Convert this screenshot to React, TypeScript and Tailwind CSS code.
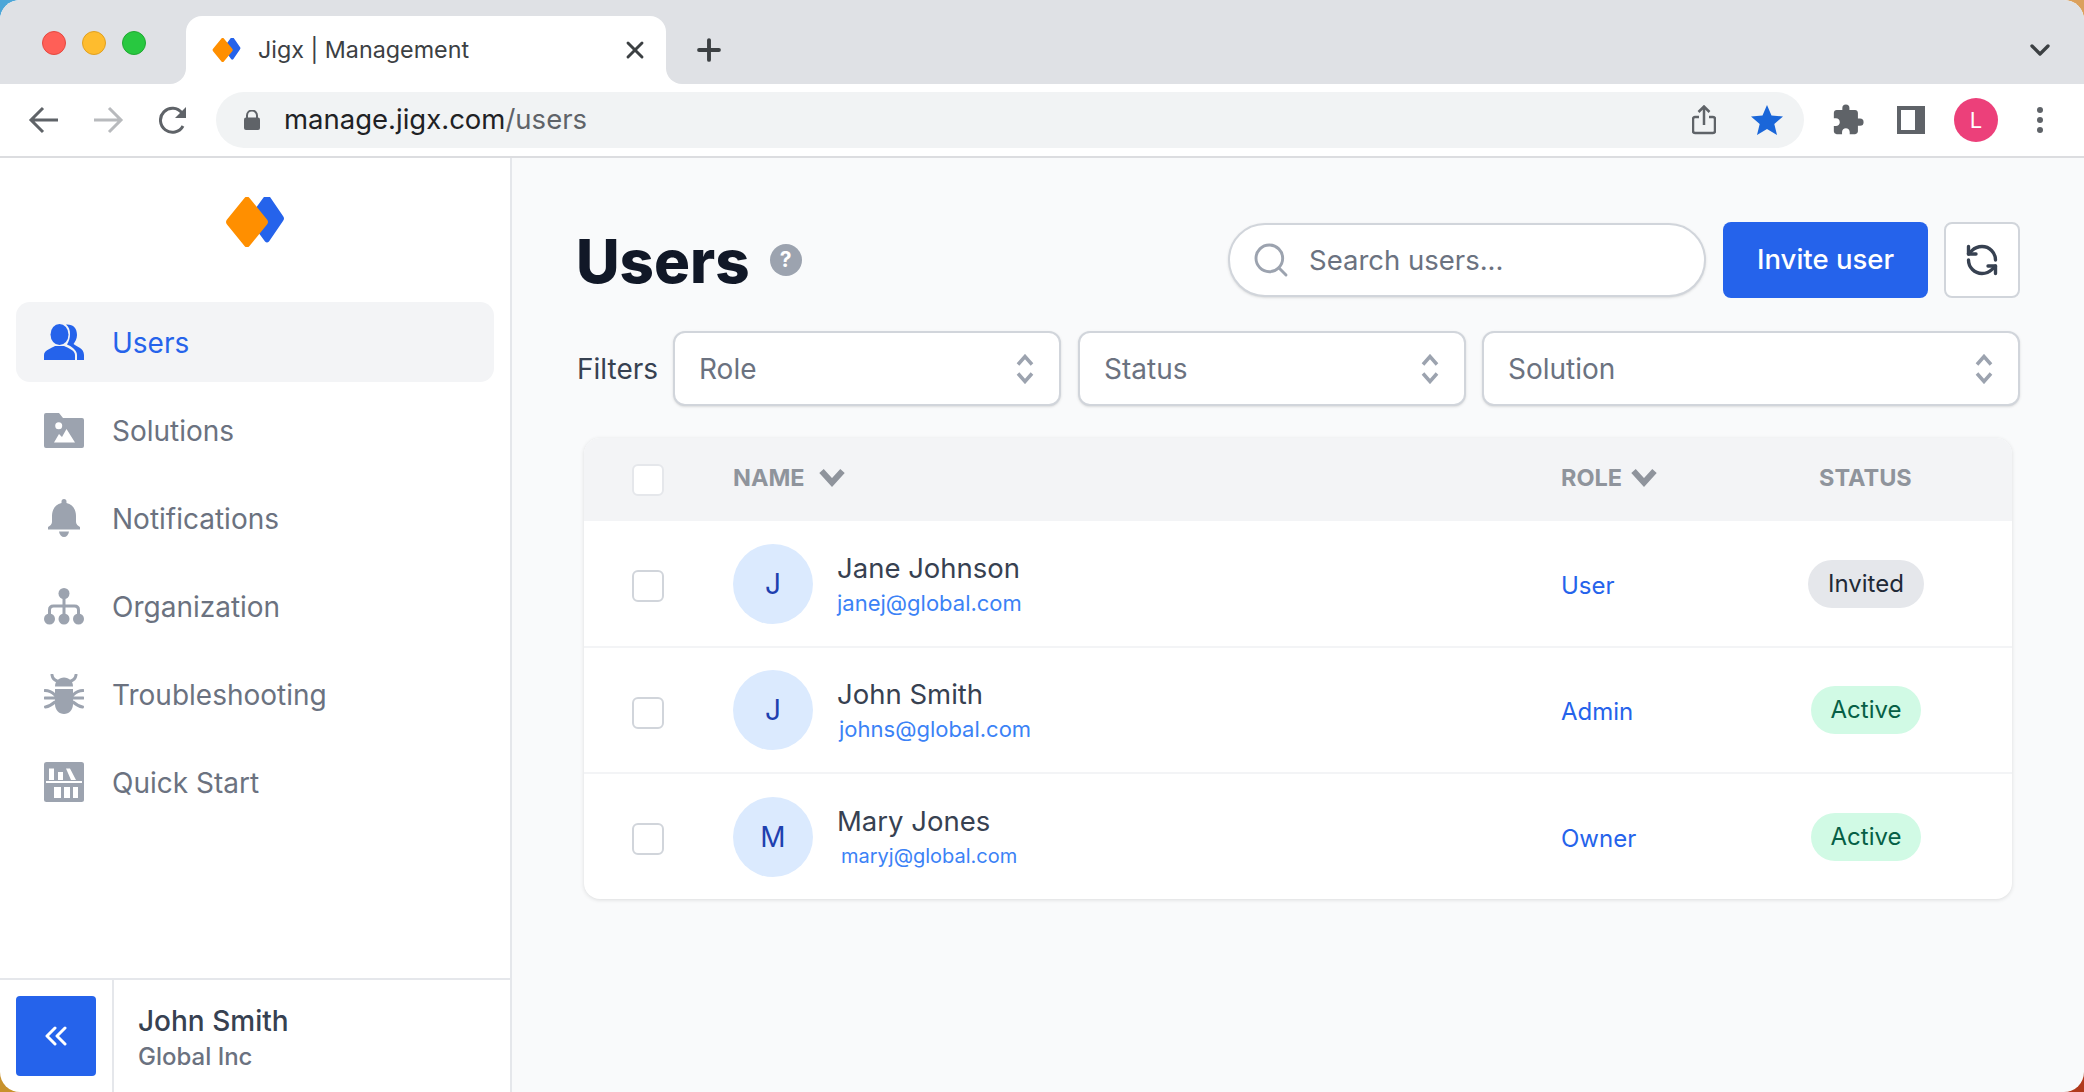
import { ChevronDown, Plus, RefreshCcw, Search, X } from 'lucide-react'
import { MdExtension } from 'react-icons/md'
import clsx from 'clsx'

function Logo({ w, h }: { w: number; h: number }) {
  return (
    <svg width={w} height={h} viewBox="0 0 58 50">
      <path d="M39 1.5a3 3 0 0 1 4 0l14 20.5a4 4 0 0 1 0 5L43 47.500a3 3 0 0 1-4 0L24 27a4 4 0 0 1 0-5z" fill="#2563eb" transform="translate(0 -3)" />
      <path d="M18.500 1a3 3 0 0 1 5 0l17.500 21.500a4 4 0 0 1 0 5L23.500 49a3 3 0 0 1-5 0L1 27.500a4 4 0 0 1 0-5z" fill="#ff8f00" />
    </svg>
  )
}

function UsersIcon() {
  return (
    <svg width="40" height="36" viewBox="0 0 40 36" fill="#2563eb">
      <ellipse cx="15.500" cy="10.500" rx="9" ry="10.500" />
      <path d="M0 36v-5c0-5 8-7 11-9h9c4 2 11 4 11 9v5z" />
      <path d="M22 .5c7-.5 11 3.500 11 10.500 0 4-2 7-3.500 9 3.500 3 10.500 4 10.500 11v5h-7v-5c0-5-6-9-10-10.500 2-3.500 3-6.500 3-10.500s-1-7-4-9.500z" />
    </svg>
  )
}

function SolutionsIcon() {
  return (
    <svg width="40" height="35" viewBox="0 0 40 35">
      <path d="M0 2a2 2 0 0 1 2-2h13l4 5h19a2 2 0 0 1 2 2v26a2 2 0 0 1-2 2H2a2 2 0 0 1-2-2z" fill="#9ca3af" />
      <circle cx="14.700" cy="12.700" r="3.500" fill="#fff" />
      <path d="M10 29.500 15 21l3 3 4.500-8L31 29.500z" fill="#fff" />
    </svg>
  )
}

function BellIcon() {
  return (
    <svg width="34" height="38" viewBox="0 0 34 38" fill="#9ca3af">
      <path d="M17 0a2.500 2.500 0 0 1 2.500 2.500V4C26 5.500 29 11 29 17v6c0 2 2 4 4 5v2.500H1V28c2-1 4-3 4-5v-6C5 11 8 5.500 14.500 4V2.500A2.500 2.500 0 0 1 17 0z" />
      <path d="M12 32.500h10c-.5 3.500-2.500 5.500-5 5.500s-4.500-2-5-5.500z" />
    </svg>
  )
}

function OrgIcon() {
  return (
    <svg width="40" height="37" viewBox="0 0 40 37" fill="#9ca3af">
      <circle cx="20" cy="5.500" r="5.500" />
      <circle cx="5.500" cy="31" r="5.500" />
      <circle cx="20" cy="31" r="5.500" />
      <circle cx="34.500" cy="31" r="5.500" />
      <path d="M20 10v20M5.500 30v-8q0-4 4-4h21q4 0 4 4v8" fill="none" stroke="#9ca3af" strokeWidth="3" />
    </svg>
  )
}

function BugIcon() {
  return (
    <svg width="40" height="40" viewBox="0 0 40 40" fill="#9ca3af">
      <path d="M11 12.500C11 7 15 3.500 20 3.500S29 7 29 12.500z" />
      <path d="M11 15h18v15c0 6-4 10-9 10s-9-4-9-10z" />
      <path d="M8 1c.5 3 2 5 5 6M32 1c-.5 3-2 5-5 6M1 16.500c4 0 7 1.500 10 4.500M39 16.500c-4 0-7 1.500-10 4.500M1 24h10M39 24H29M1.500 33c3-.5 6-2 9.500-5M38.500 33c-3-.5-6-2-9.500-5" fill="none" stroke="#9ca3af" strokeWidth="3" strokeLinecap="round" />
    </svg>
  )
}

function QuickStartIcon() {
  return (
    <svg width="40" height="40" viewBox="0 0 40 40">
      <rect width="40" height="40" rx="2.500" fill="#9ca3af" />
      <path d="M5 6.500h5V18H5zM14 10h5v8h-5zM22 6.500h4L32 18h-5zM2 19h36v2H2zM10 25h7v11h-7zM20 25h6v11h-6zM29 25h5v11h-5z" fill="#fff" />
    </svg>
  )
}

const NAV = [
  { label: 'Users', icon: <UsersIcon />, active: true },
  { label: 'Solutions', icon: <SolutionsIcon /> },
  { label: 'Notifications', icon: <BellIcon /> },
  { label: 'Organization', icon: <OrgIcon /> },
  { label: 'Troubleshooting', icon: <BugIcon /> },
  { label: 'Quick Start', icon: <QuickStartIcon /> },
]

const USERS = [
  { initial: 'J', name: 'Jane Johnson', email: 'janej@global.com', emailClass: 'text-[22px]', rowClass: 'h-[125px]', role: 'User', status: 'Invited' },
  { initial: 'J', name: 'John Smith', email: 'johns@global.com', emailClass: 'ml-[2px] text-[22px]', rowClass: 'h-[126px] border-t-2', role: 'Admin', status: 'Active' },
  { initial: 'M', name: 'Mary Jones', email: 'maryj@global.com', emailClass: 'ml-[4px] text-[20px]', rowClass: 'h-[127px] border-t-2', role: 'Owner', status: 'Active' },
]

function BrowserChrome() {
  return (
    <>
      <div className="flex h-[84px] shrink-0 bg-white">
        <div className="flex w-[186px] items-center gap-4 rounded-br-[16px] bg-[#dfe1e5] pt-[2px] pl-[42px]">
          <span className="h-6 w-6 rounded-full border border-[#e5483f] bg-[#ff5f57]" />
          <span className="h-6 w-6 rounded-full border border-[#e0a020] bg-[#febc2e]" />
          <span className="h-6 w-6 rounded-full border border-[#20a832] bg-[#28c840]" />
        </div>
        <div className="flex-1 bg-[#dfe1e5] pt-4 pr-0">
          <div className="flex">
            <div className="flex h-[68px] w-[480px] items-center rounded-t-[16px] bg-white pr-[17px] pl-[26px]">
              <Logo w={29} h={24} />
              <span className="ml-[17px] flex-1 text-[23.3px] text-[#3c4043]">Jigx | Management</span>
              <X size={28} strokeWidth={2.5} className="text-[#3c4043]" />
            </div>
          </div>
        </div>
        <div className="flex flex-[0_0_1418px] items-center justify-between rounded-bl-[16px] bg-[#dfe1e5] pt-4 pr-[28px] pl-[26px]">
          <Plus size={34} strokeWidth={2.75} className="text-[#3c4043]" />
          <ChevronDown size={32} strokeWidth={2.5} className="text-[#3c4043]" />
        </div>
      </div>
      <div className="flex h-[72px] shrink-0 items-center border-b-0 bg-white pl-[28px]">
        <svg width="32" height="28" viewBox="0 0 32 28" fill="none" stroke="#5f6368" strokeWidth="3">
          <path d="M30 14H4M15 2 3 14l12 12" />
        </svg>
        <svg className="ml-[32px]" width="32" height="28" viewBox="0 0 32 28" fill="none" stroke="#b8babd" strokeWidth="3">
          <path d="M2 14h26M17 2l12 12-12 12" />
        </svg>
        <svg className="ml-[35px]" width="30" height="28" viewBox="0 0 30 28" fill="none">
          <path d="M24 20a12 12 0 1 1-1-13" stroke="#5f6368" strokeWidth="3" />
          <path d="M27 1v11H16z" fill="#5f6368" />
        </svg>
        <div className="ml-[27px] flex h-[56px] w-[1588px] items-center rounded-full bg-[#f1f3f4] pr-[21px] pl-[28px]">
          <svg width="16" height="20" viewBox="0 0 16 20">
            <path d="M3 8V5.500a5 5 0 0 1 10 0V8" fill="none" stroke="#5f6368" strokeWidth="2" />
            <rect y="7.500" width="16" height="12.500" rx="2" fill="#5f6368" />
          </svg>
          <span className="ml-[24px] flex-1 text-[27.5px] text-[#202124]">
            manage.jigx.com<span className="text-[#5f6368]">/users</span>
          </span>
          <svg width="24" height="30" viewBox="0 0 24 30" fill="none" stroke="#5f6368" strokeWidth="2.500">
            <path d="M7 12H3a2 2 0 0 0-2 2v12a2 2 0 0 0 2 2h18a2 2 0 0 0 2-2V14a2 2 0 0 0-2-2h-4M12 20V2M6.500 7 12 1.500 17.500 7" />
          </svg>
          <svg className="ml-[35px]" width="32" height="30" viewBox="0 0 32 30">
            <path d="M16 0l4.500 10.500L32 11.500l-8.700 7.600L26 30l-10-6-10 6 2.700-10.900L0 11.500l11.500-1z" fill="#1a66d9" />
          </svg>
        </div>
        <MdExtension size={34} className="ml-[27px] text-[#5f6368]" />
        <div className="ml-[32px] flex h-[28px] w-[28px] bg-[#5f6368] py-[4px] pl-[4px]">
          <div className="h-full w-[14px] bg-white" />
        </div>
        <div className="ml-[29px] flex h-[44px] w-[44px] items-center justify-center rounded-full bg-[#ec407a] text-[22px] text-white">L</div>
        <div className="ml-[39px] flex flex-col gap-[4px]">
          <span className="h-[6px] w-[6px] rounded-full bg-[#5f6368]" />
          <span className="h-[6px] w-[6px] rounded-full bg-[#5f6368]" />
          <span className="h-[6px] w-[6px] rounded-full bg-[#5f6368]" />
        </div>
      </div>
    </>
  )
}

function Sidebar() {
  return (
    <aside className="flex w-[512px] shrink-0 flex-col border-r-2 border-[#e5e7eb] bg-white">
      <div className="flex h-[144px] shrink-0 justify-center pt-[39px]">
        <Logo w={58} h={50} />
      </div>
      <nav className="flex-1 space-y-2 px-4">
        {NAV.map((item) => (
          <div
            key={item.label}
            className={clsx(
              'flex h-[80px] items-center rounded-[14px] text-[28px]',
              item.active ? 'bg-[#f3f4f6] text-[#2563eb]' : 'text-[#6b7280]',
            )}
          >
            <span className="ml-[28px] flex w-[40px] justify-center">{item.icon}</span>
            <span className="ml-[28px] pt-[2px]">{item.label}</span>
          </div>
        ))}
      </nav>
      <div className="flex h-[114px] shrink-0 border-t-2 border-[#e5e7eb]">
        <div className="flex h-full w-[114px] shrink-0 justify-center border-r-2 border-[#e5e7eb] pt-4">
          <div className="flex h-[80px] w-[80px] items-center justify-center rounded-[4px] bg-[#2563eb]">
            <svg width="22" height="20" viewBox="0 0 22 20" fill="none" stroke="#fff" strokeWidth="3" strokeLinecap="round" strokeLinejoin="round">
              <path d="M10 2 2 10l8 8M20 2l-8 8 8 8" />
            </svg>
          </div>
        </div>
        <div className="pt-[23px] pl-[24px]">
          <div className="text-[28px] leading-[36px] font-medium text-[#374151]">John Smith</div>
          <div className="text-[24px] leading-[36px] font-medium text-[#6b7280]">Global Inc</div>
        </div>
      </div>
    </aside>
  )
}

function Select({ label, className }: { label: string; className: string }) {
  return (
    <div className={clsx('flex h-[75px] items-center justify-between rounded-[12px] border-2 border-[#d1d5db] bg-white pr-[25px] pl-[24px] shadow-sm', className)}>
      <span className="text-[28px] text-[#6b7280]">{label}</span>
      <svg width="18" height="30" viewBox="0 0 18 30" fill="none" stroke="#9ca3af" strokeWidth="3.500">
        <path d="M2 10.500 9 2.500l7 8M2 19.500l7 8 7-8" />
      </svg>
    </div>
  )
}

function SortChevron() {
  return (
    <svg width="26" height="19" viewBox="0 0 26 19" fill="none" stroke="#8f949c" strokeWidth="6">
      <path d="M2.500 3l10.500 11.500L23.500 3" />
    </svg>
  )
}

function Checkbox({ light }: { light?: boolean }) {
  return <div className={clsx('h-[32px] w-[32px] rounded-[6px] border-2 bg-white', light ? 'border-[#e5e7eb]' : 'border-[#d1d5db]')} />
}

function UsersTable() {
  return (
    <div className="mt-[32px] mr-[8px] ml-[7px] overflow-hidden rounded-[16px] bg-white shadow-[0_1px_4px_rgba(0,0,0,0.12)]">
      <div className="flex h-[83px] items-center bg-[#f3f4f6] text-[23.5px] font-bold text-[#8f949c]">
        <div className="w-[149px] pl-[48px]"><Checkbox light /></div>
        <div className="flex w-[828px] items-center gap-[14px] pb-[4px]">NAME <SortChevron /></div>
        <div className="flex w-[258px] items-center gap-[9px] pb-[4px]">ROLE <SortChevron /></div>
        <div className="pb-[4px]">STATUS</div>
      </div>
      {USERS.map((u) => (
        <div key={u.email} className={clsx('flex items-center border-[#f3f4f6]', u.rowClass)}>
          <div className="w-[149px] pt-[5px] pl-[48px]"><Checkbox /></div>
          <div className="flex w-[828px] items-center">
            <div className="flex h-[80px] w-[80px] shrink-0 items-center justify-center rounded-full bg-[#dbeafe] text-[28px] text-[#1e40af]">
              {u.initial}
            </div>
            <div className="ml-[24px] pt-[2px]">
              <div className="text-[27.5px] leading-[36px] text-[#374151]">{u.name}</div>
              <div className={clsx('leading-[34px] text-[#3b82f6]', u.emailClass)}>{u.email}</div>
            </div>
          </div>
          <div className="w-[226px] pt-[4px] text-[24px] text-[#2563eb]">{u.role}</div>
          <div className="flex w-[158px] justify-center">
            <span
              className={clsx(
                'flex h-[48px] items-center rounded-full px-[20px] text-[24px]',
                u.status === 'Active' ? 'bg-[#d1fae5] text-[#065f46]' : 'bg-[#e5e7eb] text-[#1f2937]',
              )}
            >
              {u.status}
            </span>
          </div>
        </div>
      ))}
    </div>
  )
}

export default function App() {
  return (
    <div className="h-screen bg-[conic-gradient(#dba05c_0_25%,#b03a1c_25%_50%,#c8922c_50%_75%,#4ca6d8_75%)] font-['Inter',sans-serif]">
      <div className="flex h-full flex-col overflow-hidden rounded-[20px]">
        <BrowserChrome />
        <div className="h-[2px] shrink-0 bg-[#dcdde0]" />
        <div className="flex min-h-0 flex-1">
          <Sidebar />
          <main className="flex-1 bg-[#f9fafb] pt-[64px] pr-[64px] pl-[65px]">
            <div className="flex h-[76px] items-center">
              <h1 className="-ml-px pt-[2px] text-[60px] font-extrabold text-[#111827]">Users</h1>
              <span className="ml-[20px] flex h-[32px] w-[32px] items-center justify-center rounded-full bg-[#9ca3af] text-[21px] font-bold text-white">?</span>
              <div className="ml-auto flex h-[74px] w-[478px] items-center rounded-full border-2 border-[#d1d5db] bg-white pl-[21px] shadow-sm">
                <Search size={40} strokeWidth={1.75} className="text-[#9ca3af]" />
                <span className="ml-[18px] pt-[2px] text-[27.5px] text-[#6b7280]">Search users...</span>
              </div>
              <button className="ml-[17px] h-[76px] w-[205px] rounded-[8px] bg-[#2563eb] text-[27.5px] font-medium text-white">Invite user</button>
              <button className="ml-[16px] flex h-[76px] w-[76px] items-center justify-center rounded-[8px] border-2 border-[#d1d5db] bg-white">
                <RefreshCcw size={36} strokeWidth={2.25} className="text-[#374151]" />
              </button>
            </div>
            <div className="mt-[33px] flex items-center">
              <span className="w-[96px] shrink-0 text-[28px] text-[#374151]">Filters</span>
              <Select label="Role" className="w-[388px]" />
              <Select label="Status" className="ml-[17px] w-[388px]" />
              <Select label="Solution" className="ml-[16px] flex-1" />
            </div>
            <UsersTable />
          </main>
        </div>
      </div>
    </div>
  )
}
